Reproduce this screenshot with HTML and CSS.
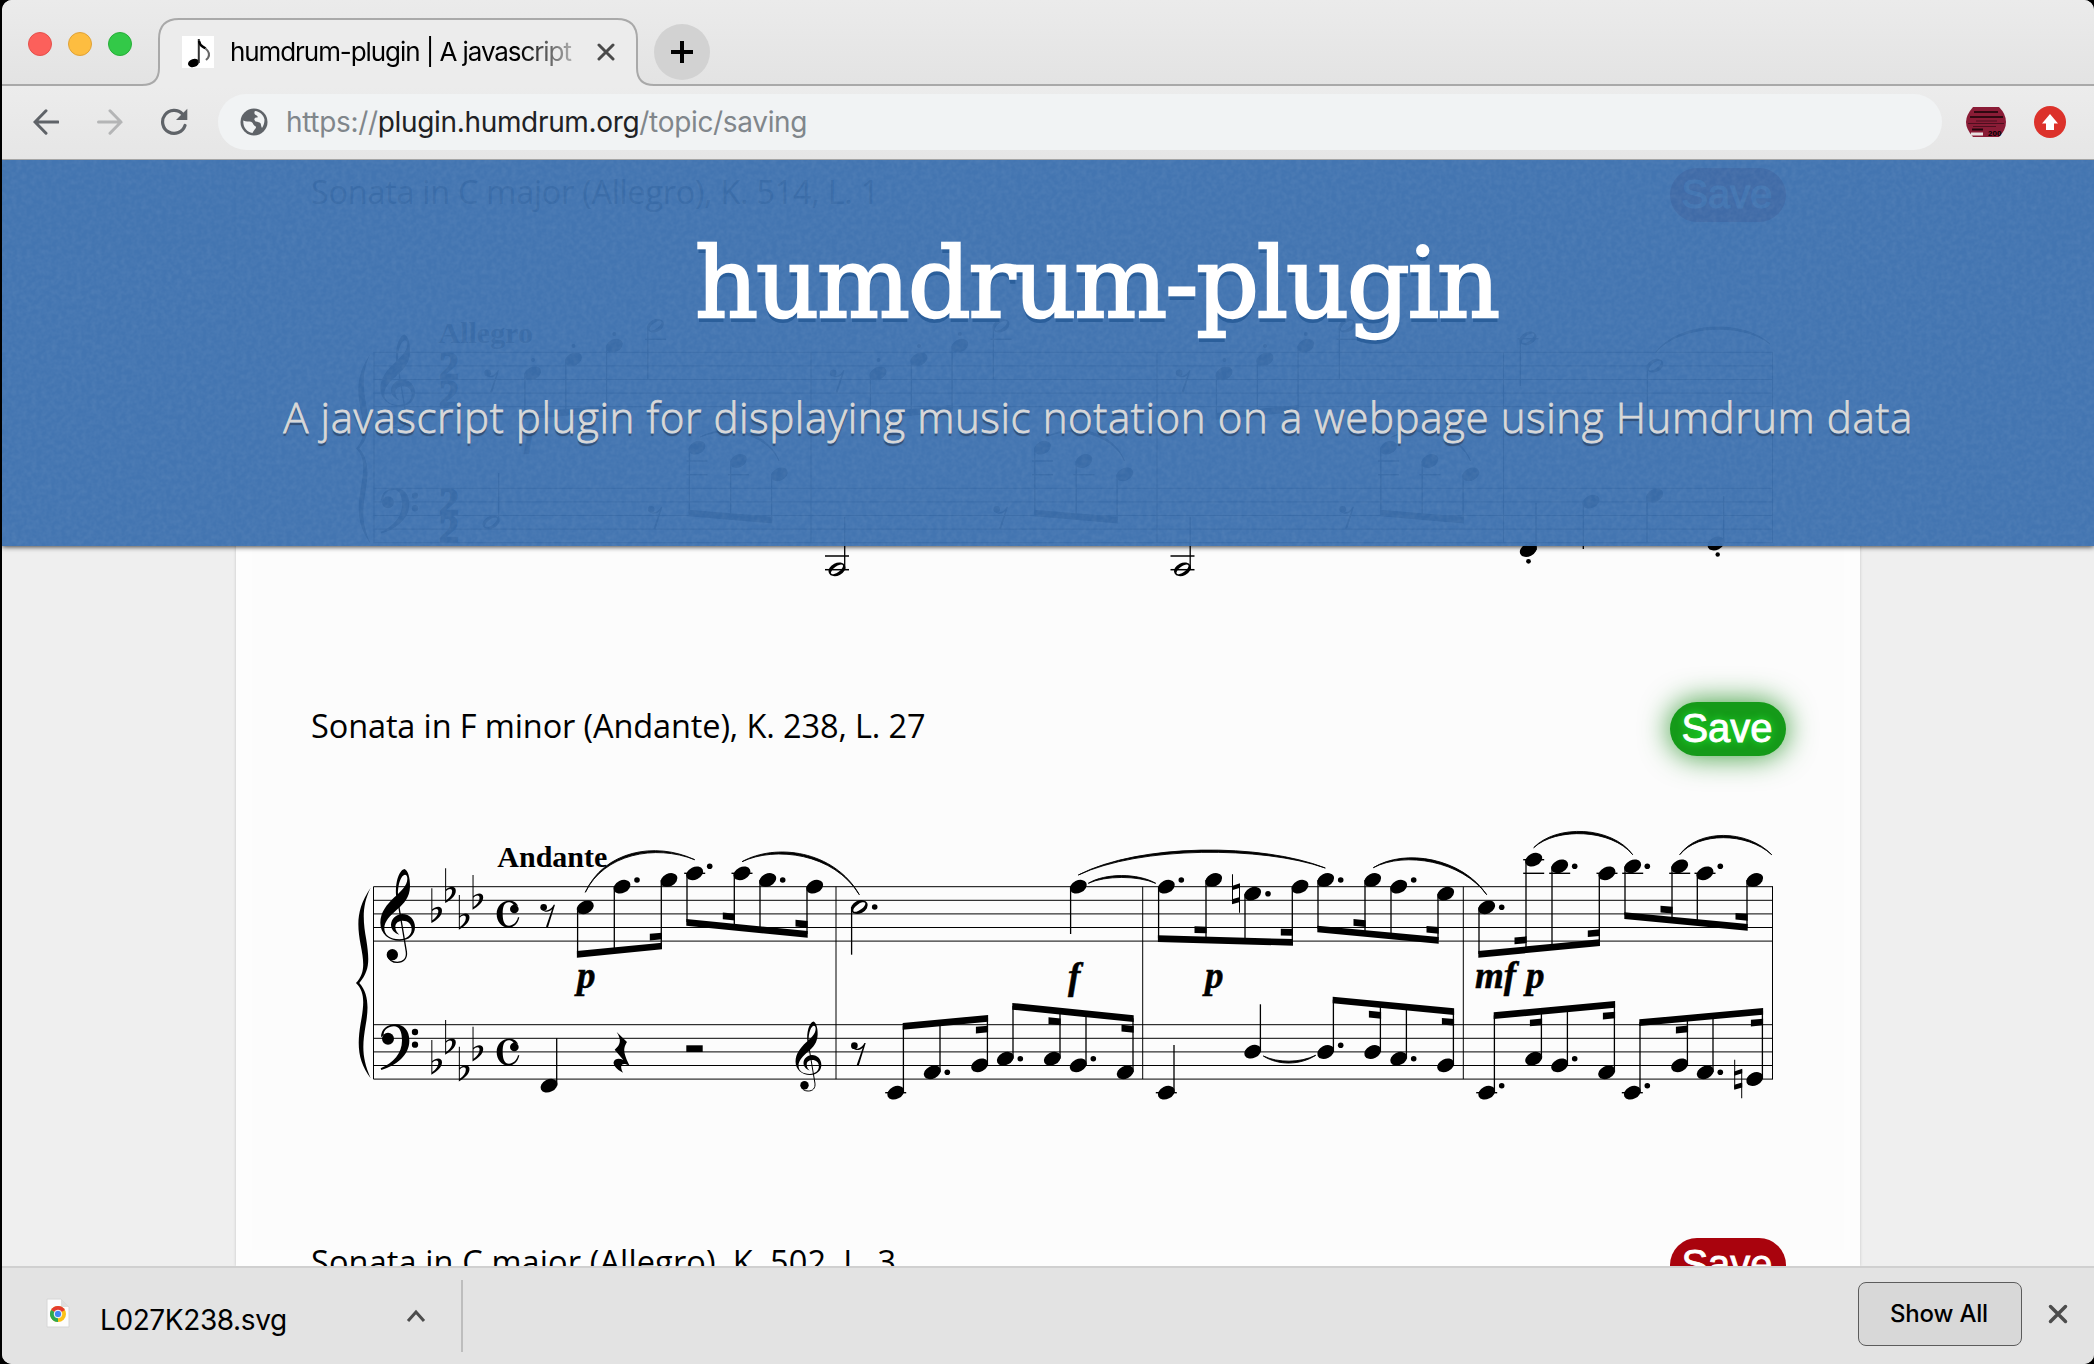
FILE: index.html
```html
<!DOCTYPE html>
<html lang="en">
<head>
<meta charset="utf-8">
<title>humdrum-plugin | A javascript plugin</title>
<link rel="stylesheet" href="styles.css">
</head>
<body>
<div class="window">
  <div class="tabstrip">
    <svg class="tab-outline" width="2092" height="86" viewBox="2 0 2092 86">
      <path d="M2 85H142Q159 85 159 68V39Q159 19 179 19H617Q637 19 637 39V68Q637 85 654 85H2094V87H2Z" fill="#ececec" stroke="#a9a9a9" stroke-width="2"/>
    </svg>
    <div class="lights"><i class="light red"></i><i class="light yellow"></i><i class="light green"></i></div>
    <div class="tab">
      <svg class="favicon" width="32" height="32" viewBox="0 0 32 32"><rect width="32" height="32" fill="#fff"/><ellipse cx="11.500" cy="27" rx="5.600" ry="4" transform="rotate(-18 11.500 27)"/><path d="M15.800 27V3H17.800V27Z" fill="#333"/><path d="M17 5C18 11 21 10 23.500 12.500" fill="none" stroke="#000" stroke-width="2.400"/><path d="M23.500 12.500Q29 17 26 22L24 24" fill="none" stroke="#666" stroke-width="2"/></svg>
      <span class="tab-title">humdrum-plugin | A javascript</span>
      <svg class="tab-close" width="18" height="18" viewBox="0 0 18 18"><path d="M2 2L16 16M16 2L2 16" stroke="#4a4a4a" stroke-width="3" stroke-linecap="round"/></svg>
    </div>
    <div class="new-tab"><svg width="24" height="24" viewBox="0 0 24 24"><path d="M12 1V23M1 12H23" stroke="#000" stroke-width="4"/></svg></div>
  </div>

  <div class="toolbar">
    <svg class="nav" width="26" height="26" viewBox="0 0 26 26"><path d="M25 13H3M13 1.800L2 13L13 24.200" fill="none" stroke="#5f6368" stroke-width="3" stroke-linecap="round"/></svg>
    <svg class="nav nav-forward" width="26" height="26" viewBox="0 0 26 26"><path d="M1.500 13H24M13 1.800L24 13L13 24.200" fill="none" stroke="#b4b5b6" stroke-width="3" stroke-linecap="round"/></svg>
    <svg class="nav nav-reload" width="28" height="28" viewBox="0 0 28 28"><path d="M25 17.500A11.500 11.500 0 1 1 22.500 6" fill="none" stroke="#5f6368" stroke-width="3.200" stroke-linecap="round"/><path d="M27.300 .800V12H16Z" fill="#5f6368"/></svg>
    <div class="omnibox">
      <svg class="globe" width="28" height="28" viewBox="0 0 28 28"><circle cx="14" cy="14" r="13.500" fill="#5f6368"/><path d="M3.300 12.500C6 13.800 9 13.400 11 13.800C13 14.200 13 17 14.500 17.800C16 18.500 16.500 19 15.500 20.500C14 22.500 13 23.500 12.500 25C7 24.300 2.800 19.500 3.300 12.500ZM15 3C20 3.500 23.500 7 24.500 11.500C24.500 15 23.500 18 22 20C20.500 17 21.500 15.500 19.500 14.500C17.500 13.600 15.500 14.500 14.500 12C13.800 10 15.500 9.500 17.500 9.500C18.500 8 16 7.500 15 6.500C14.200 5.500 14.200 4 15 3Z" fill="#f1f3f4"/></svg>
      <span class="url">https://<b>plugin.humdrum.org</b>/topic/saving</span>
    </div>
    <svg class="ext-plate" width="40" height="30" viewBox="0 0 40 30">
      <path d="M7 0H33Q40 7 40 15T33 30H7Q0 22 0 15T7 0Z" fill="#8a1c36"/>
      <path d="M8 5H32M4 10H37" stroke="#300811" stroke-width="1.800"/><path d="M10 14H31M2 16.500H38M7 19.500H30" stroke="#4d0f1f" stroke-width="1"/>
      <path d="M6 22.500H17" stroke="#22050c" stroke-width="2"/><rect x="5" y="25.500" width="12" height="3" fill="#e8dfe0"/>
      <text x="22" y="29" class="plate-text">200</text>
    </svg>
    <svg class="ext-up" width="32" height="32" viewBox="0 0 32 32"><circle cx="16" cy="16" r="16" fill="#dc322b"/><path d="M16 8L24 17.500H20V24H12V17.500H8Z" fill="#fff"/></svg>
  </div>

  <div class="viewport">
    <main class="page">
      <section class="piece">
        <div class="piece-head"><h2 class="t1">Sonata in C major (Allegro), K. 514, L. 1</h2><button class="save">Save</button></div>
        <svg class="score" id="allegro" width="1475" height="480" viewBox="311 222 1475 480"></svg>
      </section>
      <section class="piece">
        <div class="piece-head"><h2 class="t2">Sonata in F minor (Andante), K. 238, L. 27</h2><button class="save active">Save</button></div>
        <svg class="score" id="andante" width="1475" height="482" viewBox="311 756 1475 482"></svg>
      </section>
      <section class="piece">
        <div class="piece-head"><h2 class="t3">Sonata in C major (Allegro), K. 502, L. 3</h2><button class="save">Save</button></div>
      </section>
    </main>
    <header class="banner">
      <svg class="grain" width="2092" height="386"><filter id="noise" x="0" y="0" width="100%" height="100%"><feTurbulence type="fractalNoise" baseFrequency="0.200" numOctaves="2" seed="4"/><feColorMatrix values="0 0 0 0 1  0 0 0 0 1  0 0 0 0 1  0.500 0 0 0 -0.150"/></filter><rect width="2092" height="386" filter="url(#noise)"/></svg>
      <h1>humdrum-plugin</h1>
      <p>A javascript plugin for displaying music notation on a webpage using Humdrum data</p>
    </header>
  </div>

  <footer class="downloads">
    <svg class="file-icon" width="24" height="30" viewBox="0 0 24 30"><path d="M1 1H15L23 9V29H1Z" fill="#fcfcfc" stroke="#d6d6d6"/><path d="M15 1V9H23Z" fill="#ddd"/><circle cx="12" cy="16" r="8" fill="#fbc116"/><path d="M12 16L5.070 12A8 8 0 0 1 18.930 12Z" fill="#e33b2e"/><path d="M12 16L5.070 12A8 8 0 0 0 12 24Z" fill="#2da94f"/><circle cx="12" cy="16" r="3.800" fill="#4285f4" stroke="#fff" stroke-width="1"/></svg>
    <span class="file-name">L027K238.svg</span>
    <svg class="caret" width="20" height="14" viewBox="0 0 20 14"><path d="M2 12L10 3L18 12" fill="none" stroke="#4d4d4d" stroke-width="3"/></svg>
    <i class="divider"></i>
    <button class="show-all">Show All</button>
    <svg class="bar-close" width="20" height="20" viewBox="0 0 20 20"><path d="M2.500 2.500L17.500 17.500M17.500 2.500L2.500 17.500" stroke="#4d4d4d" stroke-width="3.500" stroke-linecap="round"/></svg>
  </footer>
</div>
<svg width="0" height="0" class="defs">
  <defs>
    <g id="treble"><path d="M169 232C164 190 176 152 193 147C204 150 211 175 210 200C209 232 192 250 172 268C150 288 133 304 133 325C133 345 150 358 178 358C202 357 215 345 215 327C215 312 204 302 188 302C176 302 166 309 166 320C166 332 172 339 178 344C163 339 153 328 153 314C154 296 168 283 187 282C209 282 225 299 225 322C225 345 206 362 180 362C146 362 121 341 121 308C121 278 140 254 163 232C180 216 202 198 202 176C202 168 199 164 195 164C185 164 172 190 174 228Z"/><path d="M171 226L199 395C202 416 190 427 172 427C158 427 148 422 144 408" fill="none" stroke="#000" stroke-width="4"/><circle cx="157" cy="404" r="17"/></g>
    <g id="bass"><path d="M123 652C123 628 142 613 165 613C192 613 208 632 208 662C208 705 170 735 124 750L122 745C160 728 186 700 186 662C186 634 178 619 162 619C145 619 130 630 131 645Z"/><circle cx="144" cy="656" r="18"/><circle cx="225" cy="636" r="9.500"/><circle cx="225" cy="674" r="9.500"/></g>
    <g id="flat"><path d="M274 205H277V268C288 258 306 257 306 272C306 288 290 300 274 309ZM277 301C288 293 295 284 295 274C295 264 284 265 277 273Z"/></g>
    <g id="common"><path d="M538 292C534 312 520 323 506 323C484 323 470 304 470 282C470 259 486 242 508 242C520 242 530 247 534 258L520 254C516 248 511 247 506 247C492 247 488 262 488 282C488 304 494 317 507 317C519 317 530 308 534 292Z"/><circle cx="523" cy="267" r="13"/></g>
    <g id="rest8"><circle cx="611" cy="262" r="10"/><path d="M606 269C622 276 635 266 641 254H645L624 322L618 320L636 268C629 275 616 279 606 269Z"/></g>
    <g id="rest4"><path d="M830 636L861 666C850 684 848 696 869 737C848 726 836 732 849 758C828 748 819 734 821 726C825 714 839 714 850 720L824 689C842 674 845 660 830 636Z"/></g>
    <g id="natural"><path d="M1236 163H1239V201L1260 192V278H1257V241L1236 250ZM1239 208V237L1257 232V202Z"/><path d="M1236 198L1260 190V203L1236 211ZM1236 240L1260 233V246L1236 253Z"/></g>
    <g id="brace"><path d="M92 203C50 265 50 310 62 375C73 430 75 460 48 489C75 515 73 550 62 610C50 680 55 725 92 775C66 715 66 680 77 615C87 560 85 520 58 489C90 450 88 420 79 360C68 300 66 255 92 203Z"/></g>
  </defs>
</svg>
<script src="score.js"></script>
</body>
</html>
```
FILE: styles.css
```css
* { box-sizing: border-box; }
body { margin: 0; background: #000; font-family: Inter, "Liberation Sans", sans-serif; }
svg { display: block; flex: none; }
.defs { position: absolute; }
.window { width: 2092px; height: 1364px; margin-left: 2px; display: flex; flex-direction: column; border-radius: 10px; overflow: hidden; background: #efefef; }

.tabstrip { height: 86px; position: relative; display: flex; align-items: flex-start; background: linear-gradient(#ebebeb, #e3e3e3); flex: none; }
.tab-outline { position: absolute; left: 0; top: 0; }
.lights { display: flex; gap: 16px; padding: 32px 0 0 26px; width: 158px; position: relative; }
.light { width: 24px; height: 24px; border-radius: 50%; border: 1px solid; }
.red { background: #fc605b; border-color: #e5504b; }
.yellow { background: #fdbd40; border-color: #e0a237; }
.green { background: #33c948; border-color: #27ae38; }
.tab { position: relative; width: 478px; height: 66px; margin-top: 19px; padding-left: 22px; display: flex; align-items: center; }
.tab-title { margin: 0 0 2px 16px; width: 347px; font-size: 26px; letter-spacing: -1.08px; white-space: nowrap; overflow: hidden; -webkit-mask-image: linear-gradient(90deg, #000 290px, transparent 360px); mask-image: linear-gradient(90deg, #000 290px, transparent 360px); }
.tab-close { margin-left: 20px; }
.new-tab { position: relative; margin: 24px 0 0 16px; width: 56px; height: 56px; border-radius: 50%; background: #d2d2d2; display: flex; align-items: center; justify-content: center; }

.toolbar { height: 74px; flex: none; display: flex; align-items: center; padding-left: 31px; padding-bottom: 1px; background: linear-gradient(#ececec, #e6e6e6); border-bottom: 1px solid #a5a5a5; }
.nav-forward { margin-left: 38px; }
.nav-reload { margin-left: 37px; }
.omnibox { margin-left: 30px; width: 1724px; height: 56px; border-radius: 28px; background: #f1f3f4; display: flex; align-items: center; padding-left: 22px; }
.url { margin-left: 18px; font-size: 28px; letter-spacing: -0.33px; color: #80868b; white-space: nowrap; }
.url b { font-weight: 400; color: #202124; }
.ext-plate { margin-left: 24px; }
.plate-text { font: bold 8px "Liberation Sans", sans-serif; }
.ext-up { margin-left: 28px; }

.viewport { height: 1106px; flex: none; position: relative; overflow: hidden; }
.page { width: 1624px; margin-left: 234px; height: 1106px; background: #fcfcfc; padding: 8px 74px 0 75px; box-shadow: 0 0 3px rgba(0,0,0,.18), inset 0 0 0 16px #fdfdfd; }
.piece-head { height: 54px; display: flex; justify-content: space-between; align-items: center; }
h2 { margin: 0 0 6px; font: 400 32.5px/54px "Open Sans", sans-serif; color: #000; white-space: nowrap; }
.t1 { letter-spacing: -0.3px; }
.t2 { letter-spacing: -0.12px; }
.t3 { letter-spacing: 0.12px; }
.save { width: 116px; height: 54px; border: 0; border-radius: 27px; padding: 0 2px 1px 0; background: #a9030d; color: #fff; font: 40px/53px "Liberation Sans", sans-serif; -webkit-text-stroke: 0.9px #fff; }
.save.active { background: #159a19; box-shadow: 0 0 30px rgba(0,128,0,.8); text-shadow: 0 0 8px #2f3; }
.banner { position: absolute; left: 0; top: 0; width: 2092px; height: 386px; background: rgba(59,111,174,.96); box-shadow: 0 1px 5px rgba(0,0,0,.75); text-align: center; overflow: visible; }
.grain { position: absolute; left: 0; top: 0; opacity: .2; }
.banner h1 { position: relative; margin: 0; padding: 63px 0 0 97px; font: 400 98px/120px "DejaVu Serif", serif; letter-spacing: -2.1px; color: #fff; -webkit-text-stroke: 2.4px #fff; text-shadow: 0 5px 0 #2b5f9b; }
.banner p { position: relative; margin: 0; padding: 44px 0 0 100px; font: 300 42px/60px "Open Sans", sans-serif; letter-spacing: 0.61px; color: #d8d8d8; -webkit-text-stroke: 0.8px #d8d8d8; text-shadow: 0 3px 1px rgba(40,60,90,.7); white-space: nowrap; }

.downloads { flex: none; height: 98px; border-top: 2px solid #d0d0d0; background: #e3e3e3; display: flex; align-items: center; padding-left: 44px; }
.file-icon { margin-bottom: 7px; }
.file-name { margin-left: 30px; width: 290px; font-size: 28px; letter-spacing: -0.4px; padding-top: 8px; }
.caret { margin-left: 16px; }
.divider { width: 2px; height: 72px; margin-left: 35px; background: #bdbdbd; }
.show-all { margin: 0 0 4px auto; width: 164px; height: 64px; padding: 0 8px 2px 6px; border: 1px solid #5c5c5c; border-radius: 8px; background: #d8d8d8; color: #000; font: 500 24px Inter, sans-serif; letter-spacing: -0.2px; }
.bar-close { margin: 0 26px 4px; }

.score line { stroke: #000; }
.dyn { font: italic bold 37px "Liberation Serif", serif; stroke: #000; stroke-width: .5px; }
.tempo { font: bold 30px "Liberation Serif", serif; }
.meter { font: bold 40px "Liberation Serif", serif; stroke: #000; stroke-width: 1.5px; }
```
FILE: score.js
```js
const SP = 13.6;

// Small drawing layer for one grand-staff system.
function system(id, top, bars) {
  const out = [];
  const bassTop = top + (id === 'allegro' ? 136 : 138);
  const line = (x1, y1, x2, y2, w) => out.push(`<line x1="${x1}" y1="${y1}" x2="${x2}" y2="${y2}" stroke-width="${w}"/>`);
  const api = {
    line,
    glyph(name, dx, dy) { out.push(`<use href="#${name}" transform="translate(${340 + dx} ${820 + dy}) scale(.33333)"/>`); },
    raw(s) { out.push(s); },
    text(cls, x, y, s) { out.push(`<text class="${cls}" x="${x}" y="${y}">${s}</text>`); },
    dot(x, y, r = 2.8) { out.push(`<circle cx="${x}" cy="${y}" r="${r}"/>`); },
    ledger(x, y) { line(x - 10.5, y, x + 10.5, y, 1.4); },
    head(x, y, open) {
      out.push(`<ellipse cx="${x}" cy="${y}" rx="8.9" ry="6.3" transform="rotate(-26 ${x} ${y})"/>`);
      if (open) out.push(`<ellipse cx="${x}" cy="${y}" rx="7.2" ry="2.9" transform="rotate(-36 ${x} ${y})" fill="#fcfcfc"/>`);
    },
    note(x, y, end, open) {
      api.head(x, y, open);
      const sx = end > y ? x - 7.7 : x + 7.7;
      line(sx, y, sx, end, 1.3);
    },
    // notes: [x, y, hasStub]; y1 and y2 are the beam's upper edge at both ends
    beam(notes, y1, y2, up) {
      const off = up ? 7.7 : -7.7;
      const a = notes[0][0] + off, b = notes[notes.length - 1][0] + off;
      const at = x => y1 + (x - a) / (b - a) * (y2 - y1);
      const bar = (xa, xb, d) => out.push(`<path d="M${xa} ${at(xa) + d}L${xb} ${at(xb) + d}v6.7L${xa} ${at(xa) + d + 6.7}Z"/>`);
      bar(a - .7, b + .7, 0);
      for (const [x, y, stub] of notes) {
        api.head(x, y);
        line(x + off, y, x + off, at(x + off) + 3, 1.3);
        if (stub) bar(x + off - 11.5, x + off + .7, up ? 10.7 : -10);
      }
    },
    slur(x1, y1, cx1, cy1, cx2, cy2, x2, y2, t = 3) {
      out.push(`<path d="M${x1} ${y1}C${cx1} ${cy1} ${cx2} ${cy2} ${x2} ${y2}C${cx2} ${cy2 + t} ${cx1} ${cy1 + t} ${x1} ${y1}Z" stroke="#000" stroke-width=".9" stroke-linejoin="round"/>`);
    },
    done() { document.getElementById(id).innerHTML = out.join(''); }
  };
  for (const t of [top, bassTop]) for (let i = 0; i < 5; i++) line(373.5, t + i * SP, 1773, t + i * SP, 1);
  for (const x of bars) line(x, top, x, bassTop + 4 * SP, 1);
  api.glyph('brace', 0, top - 886.7);
  api.glyph('treble', 0, top - 886.7);
  api.glyph('bass', 0, bassTop - 1024.7);
  return api;
}

function andante() {
  const s = system('andante', 886.7, [373.5, 836, 1142.7, 1463.3, 1772.5]);
  for (const [dx, dy] of [[0, 0], [13.8, -20], [27.5, 6.7], [41.2, -13.3]]) {
    s.glyph('flat', dx, dy);
    s.glyph('flat', dx, dy + 151.7);
  }
  s.glyph('common', 0, 0);
  s.glyph('common', 0, 138);
  s.text('tempo', 497.3, 866.7, 'Andante');
  s.glyph('rest8', 0, 0);

  // right hand
  s.beam([[585.3, 907.3], [622, 886.7], [669, 880, 1]], 951, 942.7);
  s.beam([[694.7, 873.3], [742, 873.3, 1], [767.7, 880], [814.7, 886.7, 1]], 919, 931);
  s.note(859.3, 907, 954.7, true);
  s.note(1078.3, 886.7, 934);
  s.beam([[1166.3, 886.7], [1213.7, 880, 1], [1252.7, 893.7], [1300, 886.7, 1]], 935.3, 939);
  s.beam([[1325.7, 880], [1372.7, 880, 1], [1398.7, 886.7], [1445.7, 893.7, 1]], 925.7, 937);
  s.beam([[1486.7, 907.3], [1533.7, 859.7, 1], [1559.7, 866.3], [1607, 873.3, 1]], 951, 939.3);
  s.beam([[1632.7, 866.3], [1679.7, 866.3, 1], [1705, 873.3], [1754.7, 880, 1]], 912.3, 924);
  for (const x of [694.7, 742, 1533.7, 1559.7, 1607, 1632.7, 1679.7, 1705]) s.ledger(x, 873.3);
  s.ledger(1533.7, 859.7);
  for (const [x, y] of [[637, 880], [709.7, 866.3], [782.7, 880], [874.7, 907], [1181.3, 880], [1268, 893.7], [1340.7, 880], [1413.7, 880], [1501.7, 907.3], [1574.7, 866.3], [1647.3, 866.3], [1720.3, 866.3]]) s.dot(x, y);
  s.glyph('natural', 480, 0);
  s.slur(585.3, 892.3, 604, 851, 655, 841, 694.7, 859.7);
  s.slur(742, 861.7, 775, 843, 834, 850, 859.3, 894.7);
  s.slur(1088.3, 883.3, 1105, 873, 1138, 873, 1155.7, 883.3, 2.5);
  s.slur(1078.3, 875, 1140, 843, 1262, 843, 1325.3, 868);
  s.slur(1373.3, 867.7, 1405, 848, 1462, 858, 1486.7, 894.7);
  s.slur(1533.7, 847.7, 1556, 824, 1612, 826, 1632.7, 854.7);
  s.slur(1679.7, 854.7, 1698, 829, 1747, 829, 1771.7, 854.7);

  // dynamics
  s.text('dyn', 577, 987.5, 'p');
  s.text('dyn', 1068, 989, 'f');
  s.text('dyn', 1205, 987.5, 'p');
  s.text('dyn', 1475, 988, 'mf');
  s.text('dyn', 1526, 987.5, 'p');

  // left hand
  s.note(549, 1085.7, 1038.3);
  s.glyph('rest4', 0, 0);
  s.raw('<rect x="686.3" y="1045.3" width="16.4" height="6.7"/>');
  s.raw('<use href="#treble" transform="translate(765.5 985) scale(.2483)"/>');
  s.glyph('rest8', 310.7, 138.3);
  s.beam([[895.7, 1092.7], [932.3, 1072.3], [979.7, 1065.3, 1]], 1023, 1015, true);
  s.beam([[1005.3, 1058.7], [1052.3, 1058.7, 1], [1078.3, 1065.3], [1125.3, 1072.3, 1]], 1003, 1015.3, true);
  s.note(1166.3, 1092.7, 1045);
  s.note(1252.7, 1051.7, 1004.3);
  s.beam([[1325.7, 1052], [1372.7, 1052, 1], [1398.7, 1058.7], [1445.7, 1065.3, 1]], 996.7, 1008.3, true);
  s.beam([[1486.7, 1092.7], [1533.7, 1058.7, 1], [1559.7, 1065.3], [1606.7, 1072.3, 1]], 1012.3, 1001, true);
  s.beam([[1632.3, 1092.7], [1679.7, 1065.3, 1], [1705.3, 1072.3], [1754.7, 1079, 1]], 1019.3, 1008, true);
  for (const x of [895.7, 1166.3, 1486.7, 1632.3]) s.ledger(x, 1092.7);
  for (const [x, y] of [[947.3, 1072.3], [1020.3, 1058.7], [1093.3, 1058.7], [1340.7, 1045.3], [1413.7, 1058.7], [1501.7, 1085.7], [1574.7, 1058.7], [1647.3, 1085.7], [1720.3, 1072.3]]) s.dot(x, y);
  s.glyph('natural', 982.2, 185.5);
  s.slur(1263.3, 1056, 1278, 1063, 1300, 1063, 1315.7, 1055.3, 2.5);
  s.done();
}

function allegro() {
  const s = system('allegro', 352.3, [374, 811, 1157, 1503.5, 1772.5]);
  s.text('tempo', 438.5, 342.7, 'Allegro');
  for (const y of [379, 406.5, 515, 542]) s.text('meter', 439, y, '2');
  for (const x of [0, 346, 692]) {
    const k = x ? x - .5 : 0;
    s.glyph('rest8', k - 56, -534.4);
    s.beam([[532.6 + k, 373.3], [573.5 + k, 359.3], [614.3 + k, 345.7]], 413, 405);
    for (const [dx, y] of [[533, 360], [573.5, 346], [614.3, 334]]) s.dot(dx + k, y, 2);
    s.note(655.5 + k, 325.7, 380, true);
    s.ledger(655.5 + k, 339.3);
    s.glyph('rest8', k + 107.5, -398);
    s.beam([[697 + k, 447.7], [738.4 + k, 461], [779.3 + k, 474.3]], 509.7, 516.7);
    s.ledger(697 + k, 461);
    s.ledger(697 + k, 474.7);
    s.ledger(738.4 + k, 474.7);
    s.slur(700 + k, 437, 735 + k, 420, 770 + k, 436, 779 + k, 461);
  }
  for (const x of [837, 1182.5]) {
    s.note(x, 569.3, 516.7, true);
    s.line(x - 12, 556, x + 12, 556, 1.5);
    s.line(x - 12, 569.7, x + 12, 569.7, 1.5);
  }
  s.note(491, 522.3, 473, true);
  s.text('dyn', 524, 446, 'f');
  s.note(1528, 338.3, 386, true);
  s.ledger(1528, 338.7);
  s.note(1655, 365.7, 413, true);
  s.slur(1655, 353, 1680, 320, 1745, 320, 1770, 344);
  s.note(1528.3, 550, 502.7);
  s.dot(1528.5, 561.3, 2.4);
  s.note(1591, 501.7, 549);
  s.note(1654.7, 495.5, 542);
  s.note(1716, 543.5, 496);
  s.dot(1717.7, 554.5, 2.2);
  s.done();
}

allegro();
andante();
```
